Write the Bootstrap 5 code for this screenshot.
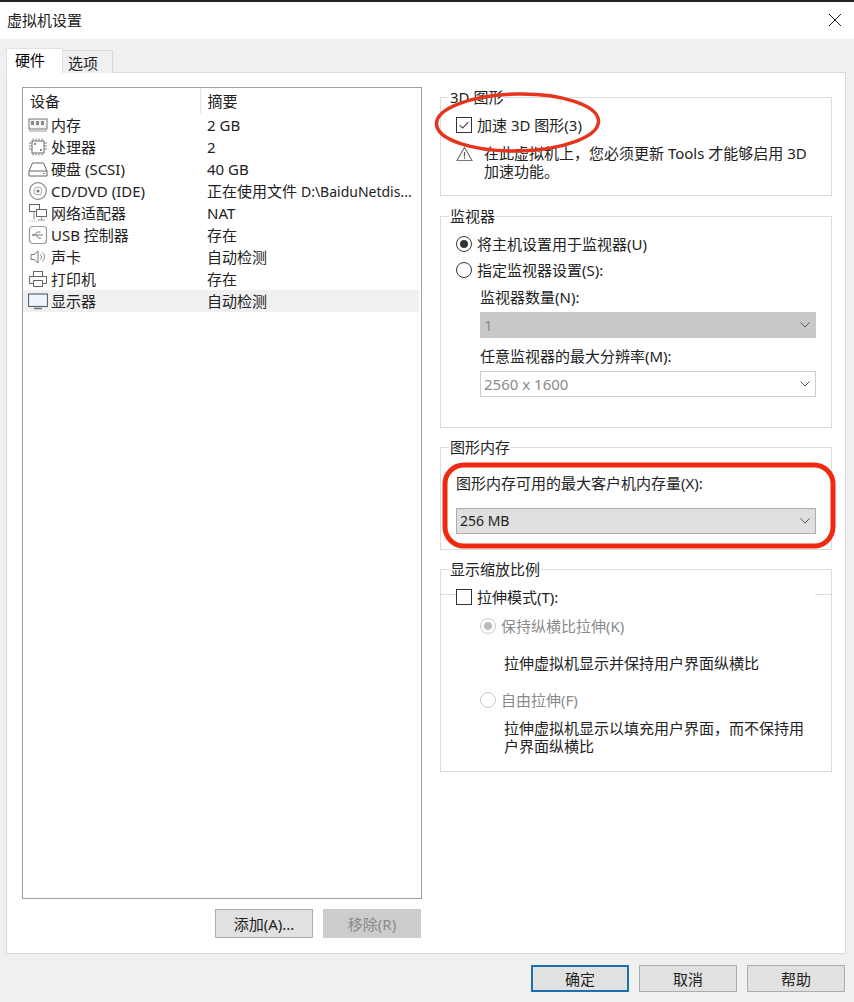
<!DOCTYPE html>
<html lang="zh-CN">
<head>
<meta charset="utf-8">
<title>虚拟机设置</title>
<link href="https://cdn.jsdelivr.net/npm/bootstrap@5.3.0/dist/css/bootstrap.min.css" rel="stylesheet">
<style>
html,body{width:854px;height:1002px;overflow:hidden;margin:0}
body{background:#f0f0f0;font-family:"Noto Sans","Noto Sans CJK SC",sans-serif;font-size:15px;line-height:18px;color:#222}
.win{height:1002px;border-top:2px solid #222;position:relative}
.titlebar{height:37px;background:#fff;padding:0 7px 2px;font-size:15px}
.closex{width:14px;height:14px;margin-right:5px}
.tabstrip{height:34px;padding:9px 0 0 6px}
.tabstrip .nav-link{color:#222;font-size:15px;line-height:18px;border-radius:0;padding:2px 0 0 8px;height:25px;margin:0;width:57px;background:#fff;border:1px solid #d9d9d9;border-bottom:0}
.tabstrip .nav-item+.nav-item .nav-link{width:50px;height:23px;margin-top:2px;background:#f0f0f0;border-left:0;padding:3px 0 0 5px}
.tabstrip.nav-tabs{--bs-nav-tabs-border-width:0;border:0}
.panel{height:882px;margin:-1px 8px 0 6px;background:#fff;border:1px solid #d9d9d9;gap:18px;padding:14px 12px 0 15px}
.leftcol{width:400px;flex:none}
.devbox{height:812px;border:1px solid #a0a0a0;background:#fff}
.devtable{--bs-table-bg:transparent;margin:0;width:396px;table-layout:fixed;color:#222;border-collapse:collapse}
.devtable th,.devtable td{padding:0;border:0;height:22px;vertical-align:middle;white-space:nowrap;font-weight:400;color:#222;box-shadow:none;background:transparent}
.devtable th{height:26px;padding-left:7px}
.devtable th+th{border-left:1px solid #e4e4e4;padding-left:7px}
.devtable td+td{padding-left:7px;overflow:hidden}
.devtable tr.sel td{background:#f0f0f0}
.devcell{gap:3px;padding-left:5px}
.devico{width:20px;height:20px;flex:none}
.tight{font-size:14px}
.leftbtns{gap:10px;margin:10px 1px 0 0}
.winbtn{width:98px;height:29px;padding:0;border-radius:0;background:#e1e1e1;border:1px solid #adadad;font-size:15px;line-height:18px;color:#222}
.winbtn:disabled{background:#ccc;border-color:#ccc;color:#8a8a8a;opacity:1}
.rightcol{width:392px;flex:none;padding-top:10px}
.grp{border:1px solid #dcdcdc;padding:0 15px;margin-bottom:19px}
.grp.first{margin-bottom:20px}
.grp-legend{display:table;background:#fff;margin:-11px 0 0 -7px;padding:0 1px;height:20px;line-height:20px}
.form-check-input.boxed{width:16px;height:16px;margin:0;border:1px solid #333;border-radius:0;background-color:#fff;flex:none;box-shadow:none;float:none}
.form-check-input.boxed[type=checkbox]:checked{background-color:#fff;border-color:#333;background-image:url("data:image/svg+xml,%3csvg xmlns='http://www.w3.org/2000/svg' viewBox='0 0 16 16'%3e%3cpath fill='none' stroke='%23444' stroke-width='1.2' d='M3 8l3.4 3.4L13 4.6'/%3e%3c/svg%3e");background-size:100%}
.form-check-input.boxed[type=radio]{border-radius:50%}
.form-check-input.boxed[type=radio]:checked{background-color:#fff;border-color:#333;background-image:url("data:image/svg+xml,%3csvg xmlns='http://www.w3.org/2000/svg' viewBox='0 0 16 16'%3e%3ccircle cx='8' cy='8' r='4.6' fill='%23333'/%3e%3c/svg%3e");background-size:100%}
.form-check-input.boxed[type=radio]:disabled{border-color:#ccc;opacity:1}
.form-check-input.boxed[type=radio]:disabled:checked{background-image:url("data:image/svg+xml,%3csvg xmlns='http://www.w3.org/2000/svg' viewBox='0 0 16 16'%3e%3ccircle cx='8' cy='8' r='4.6' fill='%23bbb'/%3e%3c/svg%3e")}
.optrow{gap:5px;height:20px;line-height:20px}
.muted-opt{color:#8a8a8a}
.winselect{height:26px;border-radius:0;padding:0 0 0 3px;font-size:15px;line-height:24px;background-color:#dfdfdf;border:1px solid #adadad;color:#222;box-shadow:none;background-size:10px 6px;background-position:right 5px center;background-image:url("data:image/svg+xml,%3csvg xmlns='http://www.w3.org/2000/svg' viewBox='0 0 10 6'%3e%3cpath fill='none' stroke='%23555' d='M.5.5L5 5 9.500.5'/%3e%3c/svg%3e")}
.winselect.tight{font-size:14px}
.winselect:disabled{color:#8a8a8a}
.winselect.solidgrey:disabled{background-color:#c8c8c8;border-color:#c8c8c8}
.winselect.plainwhite:disabled{background-color:#fff;border-color:#ccc}
.ind{margin-left:24px}
.ind2{margin-left:48px}
.warn-ico{width:17px;height:16px;flex:none;margin:2px 0 0 0}
.warnrow{gap:11px;margin-top:9px;padding-bottom:15px}
.stretchrow{margin:8px -15px 0}
.sideline{height:1px;background:#dcdcdc;margin-top:7px;flex:none}
.sideline.lft{width:15px}
.sideline.rgt{width:16px}
.stretchrow .optrow{flex:1}
.bottombar{height:47px;gap:10px;padding:11px 9px 0 0}
.btn-primary-win{border:2px solid #1c71a8}
.btn-bar{height:27px}
.redmark{position:absolute;pointer-events:none;left:0;top:-2px;width:854px;height:1002px}
.mon2{margin-top:6px}
.mon-lab1{margin-top:8px}
.mon-sel{margin-top:6px;width:336px}
.mon-lab2{margin-top:9px}
.mon-sel2{margin-top:6px;width:336px;margin-bottom:30px}
.mem-lab{margin-top:17px}
.mem-sel{margin-top:16px;width:360px;margin-bottom:15px}
.zoomgrp{height:203px}
.z-r1{margin-top:9px}
.z-t1{margin-top:18px}
.z-r2{margin-top:18px}
.z-t2{margin-top:9px}
</style>
</head>
<body>
<div class="win">
  <div class="titlebar d-flex align-items-center justify-content-between">
    <span>虚拟机设置</span>
    <svg class="closex" viewBox="0 0 14 14"><path d="M1 1l12 12M13 1L1 13" stroke="#222" stroke-width="1" fill="none"/></svg>
  </div>
  <ul class="nav nav-tabs tabstrip">
    <li class="nav-item"><a class="nav-link active" href="#">硬件</a></li>
    <li class="nav-item"><a class="nav-link" href="#">选项</a></li>
  </ul>
  <div class="panel d-flex">
    <div class="leftcol">
      <div class="devbox">
        <table class="table devtable">
          <colgroup><col style="width:177px"><col></colgroup>
          <thead><tr><th>设备</th><th>摘要</th></tr></thead>
          <tbody>
            <tr><td><div class="d-flex align-items-center devcell"><svg class="devico" viewBox="0 0 20 20"><rect x="1" y="4" width="18" height="10" fill="#f4f4f4" stroke="#777"/><path d="M3 6h3v4H3zM8 6h3v4H8zM13 6h3v4h-3z" fill="#888"/><path d="M1 16h18" stroke="#999"/></svg><span>内存</span></div></td><td>2 GB</td></tr>
            <tr><td><div class="d-flex align-items-center devcell"><svg class="devico" viewBox="0 0 20 20"><rect x="4" y="4" width="12" height="12" fill="#fff" stroke="#666"/><path d="M5 1.500v2M8 1.500v2M11 1.500v2M14 1.500v2M5 16.500v2M8 16.500v2M11 16.500v2M14 16.500v2M1 6h2.500M1 9h2.500M1 12h2.500M16.500 6H19M16.500 9H19M16.500 12H19" stroke="#777"/><circle cx="7" cy="7" r=".9" fill="#555"/><circle cx="13" cy="13" r=".9" fill="#555"/></svg><span>处理器</span></div></td><td>2</td></tr>
            <tr><td><div class="d-flex align-items-center devcell"><svg class="devico" viewBox="0 0 20 20"><path d="M1 12L4.500 4h11l3.500 8v5H1z" fill="#fff" stroke="#666"/><path d="M1 12h18" stroke="#666"/><path d="M15 14.500h2" stroke="#888"/></svg><span>硬盘 (SCSI)</span></div></td><td>40 GB</td></tr>
            <tr><td><div class="d-flex align-items-center devcell"><svg class="devico" viewBox="0 0 20 20"><circle cx="10" cy="10" r="8.300" fill="#fff" stroke="#888" stroke-width="1.200"/><circle cx="10" cy="10" r="4" fill="none" stroke="#aaa"/><circle cx="10" cy="10" r="1.500" fill="#777"/></svg><span>CD/DVD (IDE)</span></div></td><td>正在使用文件 <span class="tight">D:\BaiduNetdis...</span></td></tr>
            <tr><td><div class="d-flex align-items-center devcell"><svg class="devico" viewBox="0 0 20 20"><rect x="1.500" y="1.500" width="10" height="7" fill="#fff" stroke="#666"/><rect x="8.500" y="6.500" width="10" height="7" fill="#fff" stroke="#666"/><path d="M13.500 13.500v3M10 17h7M6 8.500v8" stroke="#888" fill="none"/><path d="M2 18h8" stroke="#bbb" stroke-dasharray="1 1"/></svg><span>网络适配器</span></div></td><td>NAT</td></tr>
            <tr><td><div class="d-flex align-items-center devcell"><svg class="devico" viewBox="0 0 20 20"><rect x="1.500" y="1.500" width="17" height="17" rx="3" fill="#fff" stroke="#999" stroke-width="1.200"/><path d="M4.500 10H15M6.500 10l3-3h3M8 10l2.500 3H13" stroke="#777" fill="none"/><path d="M4 10l2-1.500v3z" fill="#777"/></svg><span>USB 控制器</span></div></td><td>存在</td></tr>
            <tr><td><div class="d-flex align-items-center devcell"><svg class="devico" viewBox="0 0 20 20"><path d="M3 7.500h3L10 4v12l-4-3.500H3z" fill="#fff" stroke="#777"/><path d="M12.500 7.500a3.500 3.500 0 0 1 0 5M14.500 5.500a6 6 0 0 1 0 9" stroke="#888" fill="none"/></svg><span>声卡</span></div></td><td>自动检测</td></tr>
            <tr><td><div class="d-flex align-items-center devcell"><svg class="devico" viewBox="0 0 20 20"><rect x="5.500" y="2.500" width="9" height="5" fill="#fff" stroke="#666"/><path d="M5.500 14.500h-4v-7h17v7h-4" fill="#fff" stroke="#666"/><rect x="5.500" y="11.500" width="9" height="6" fill="#fff" stroke="#666"/></svg><span>打印机</span></div></td><td>存在</td></tr>
            <tr class="sel"><td><div class="d-flex align-items-center devcell"><svg class="devico" viewBox="0 0 20 20"><rect x=".5" y="3" width="19" height="12.500" fill="#eef4f8" stroke="#556a78" stroke-width="1.200"/><path d="M6 17.500h8" stroke="#777" stroke-width="1.500"/></svg><span>显示器</span></div></td><td>自动检测</td></tr>
          </tbody>
        </table>
      </div>
      <div class="d-flex justify-content-end leftbtns">
        <button type="button" class="btn winbtn">添加(A)...</button>
        <button type="button" class="btn winbtn" disabled>移除(R)</button>
      </div>
    </div>
    <div class="rightcol">
      <fieldset class="grp first">
        <div class="grp-legend">3D 图形</div>
        <label class="d-flex align-items-center optrow mt-2"><input class="form-check-input boxed" type="checkbox" checked><span>加速 3D 图形(3)</span></label>
        <div class="d-flex warnrow">
          <svg class="warn-ico" viewBox="0 0 17 16"><path d="M8.500 1.500L16 14.500H1z" fill="#fff" stroke="#777" stroke-width="1.200"/><path d="M8.500 6v4.500M8.500 11.500v1.500" stroke="#555" stroke-width="1.200"/></svg>
          <div>在此虚拟机上，您必须更新 Tools 才能够启用 3D<br>加速功能。</div>
        </div>
      </fieldset>
      <fieldset class="grp">
        <div class="grp-legend">监视器</div>
        <label class="d-flex align-items-center optrow mt-2"><input class="form-check-input boxed" type="radio" name="mon" checked><span>将主机设置用于监视器(U)</span></label>
        <label class="d-flex align-items-center optrow mon2"><input class="form-check-input boxed" type="radio" name="mon"><span>指定监视器设置(S):</span></label>
        <div class="ind mon-lab1">监视器数量(N):</div>
        <select class="form-select winselect solidgrey ind mon-sel" disabled><option>1</option></select>
        <div class="ind mon-lab2">任意监视器的最大分辨率(M):</div>
        <select class="form-select winselect plainwhite ind mon-sel2" disabled><option>2560 x 1600</option></select>
      </fieldset>
      <fieldset class="grp">
        <div class="grp-legend">图形内存</div>
        <div class="mem-lab">图形内存可用的最大客户机内存量(X):</div>
        <select class="form-select winselect tight mem-sel"><option>256 MB</option></select>
      </fieldset>
      <fieldset class="grp zoomgrp">
        <div class="grp-legend">显示缩放比例</div>
        <div class="d-flex align-items-start stretchrow">
          <div class="sideline lft"></div>
          <label class="d-flex align-items-center optrow"><input class="form-check-input boxed" type="checkbox"><span>拉伸模式(T):</span></label>
          <div class="sideline rgt"></div>
        </div>
        <label class="d-flex align-items-center optrow ind muted-opt z-r1"><input class="form-check-input boxed" type="radio" name="z" checked disabled><span>保持纵横比拉伸(K)</span></label>
        <div class="ind2 z-t1">拉伸虚拟机显示并保持用户界面纵横比</div>
        <label class="d-flex align-items-center optrow ind muted-opt z-r2"><input class="form-check-input boxed" type="radio" name="z" disabled><span>自由拉伸(F)</span></label>
        <div class="ind2 z-t2">拉伸虚拟机显示以填充用户界面，而不保持用<br>户界面纵横比</div>
      </fieldset>
    </div>
  </div>
  <div class="d-flex justify-content-end bottombar">
    <button type="button" class="btn winbtn btn-bar btn-primary-win">确定</button>
    <button type="button" class="btn winbtn btn-bar">取消</button>
    <button type="button" class="btn winbtn btn-bar">帮助</button>
  </div>
  <svg class="redmark" viewBox="0 0 854 1002">
    <ellipse cx="517.500" cy="122.500" rx="81" ry="28.500" transform="rotate(-1 517 122)" fill="none" stroke="#e5361d" stroke-width="3.500"/>
    <rect x="445" y="465" width="388" height="81" rx="19" fill="none" stroke="#f02a10" stroke-width="5"/>
  </svg>
</div>
</body>
</html>
